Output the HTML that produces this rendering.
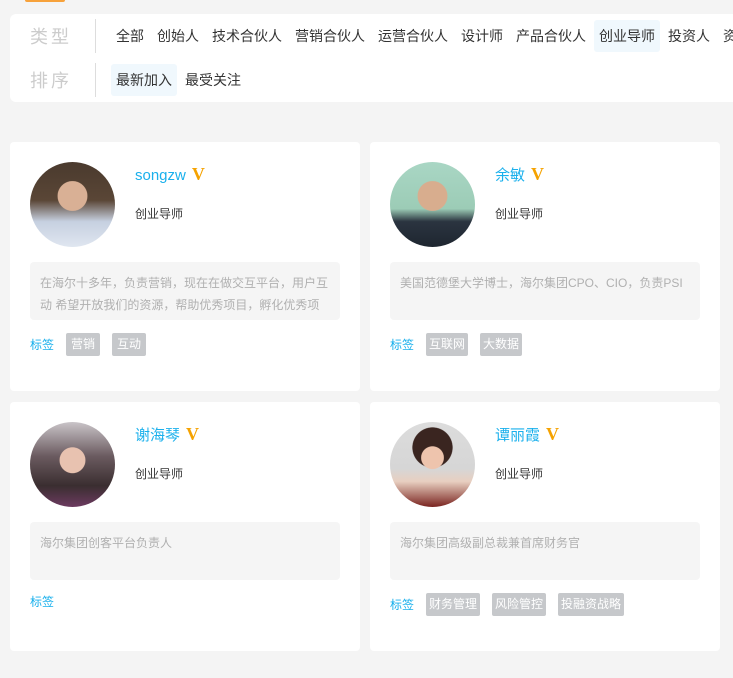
<!DOCTYPE html>
<html><head><meta charset="utf-8"><style>
*{margin:0;padding:0;box-sizing:border-box}
body{width:733px;height:678px;overflow:hidden;background:#f4f4f4;font-family:"Liberation Sans","Noto Sans CJK SC",sans-serif;position:relative}
.top{position:absolute;left:25px;top:-6px;width:40px;height:8px;background:#f7a23b;border-radius:2px}
.filter{position:absolute;left:10px;top:14px;width:740px;height:88px;background:#fff;border-radius:6px}
.row{position:absolute;left:0;height:44px;display:flex;align-items:center;white-space:nowrap}
.lab{width:85px;padding-left:20px;font-size:18px;color:#ccc;letter-spacing:3px}
.div{width:1px;height:34px;background:#ddd;margin-right:15px}
.it{font-size:14px;color:#333;padding:6px 5px;margin-right:3px;border-radius:3px}
.it.on{background:#f0f8fd}
.card{position:absolute;width:350px;height:249px;background:#fff;border-radius:4px}
.av{position:absolute;left:20px;top:20px;width:85px;height:85px;border-radius:50%;overflow:hidden}
.nm{position:absolute;left:125px;top:22px;font-size:15px;color:#1ab0ec}
.v{color:#f5a200;font-family:"Liberation Serif",serif;font-weight:bold;font-size:18px;margin-left:6px}
.role{position:absolute;left:125px;top:63px;font-size:12px;color:#333}
.desc{position:absolute;left:20px;top:120px;width:310px;height:58px;background:#f5f5f5;border-radius:4px;padding:10px 10px 0;font-size:12px;line-height:22px;color:#b0b0b0;overflow:hidden}
.tags{position:absolute;left:20px;top:191px;display:flex;align-items:center;font-size:12px}
.tl{color:#1ab0ec;margin-right:12px}
.tg{background:#c6c8cb;color:#fff;height:23px;line-height:23px;padding:0 3px;min-width:34px;text-align:center;border-radius:2px;margin-right:12px}
</style></head><body>
<div class="top"></div>
<div class="filter">
<div class="row" style="top:0px"><div class="lab">类型</div><div class="div"></div>
<span class="it">全部</span><span class="it">创始人</span><span class="it">技术合伙人</span><span class="it">营销合伙人</span><span class="it">运营合伙人</span><span class="it">设计师</span><span class="it">产品合伙人</span><span class="it on">创业导师</span><span class="it">投资人</span><span class="it">资源</span></div>
<div class="row" style="top:44px"><div class="lab">排序</div><div class="div"></div>
<span class="it on">最新加入</span><span class="it">最受关注</span></div>
</div>

<div class="card" style="left:10px;top:142px">
<div class="av" style="background:radial-gradient(circle at 50% 40%,#d9b095 0 22%,transparent 23%),linear-gradient(180deg,#4a3a2e 0,#5a4636 45%,#c6d0e0 70%,#dfe6f0 100%)"></div>
<div class="nm">songzw<span class="v">V</span></div>
<div class="role">创业导师</div>
<div class="desc">在海尔十多年，负责营销，现在在做交互平台，用户互动 希望开放我们的资源，帮助优秀项目，孵化优秀项</div>
<div class="tags"><span class="tl">标签</span><span class="tg">营销</span><span class="tg">互动</span></div>
</div>

<div class="card" style="left:370px;top:142px">
<div class="av" style="background:radial-gradient(circle at 50% 40%,#d8ad8e 0 22%,transparent 23%),linear-gradient(180deg,#a9d6c4 0,#9cccb6 55%,#2b3440 70%,#1e2630 100%)"></div>
<div class="nm">余敏<span class="v">V</span></div>
<div class="role">创业导师</div>
<div class="desc">美国范德堡大学博士，海尔集团CPO、CIO，负责PSI</div>
<div class="tags"><span class="tl">标签</span><span class="tg">互联网</span><span class="tg">大数据</span></div>
</div>

<div class="card" style="left:10px;top:402px">
<div class="av" style="background:radial-gradient(circle at 50% 45%,#e8c2b0 0 20%,transparent 21%),linear-gradient(180deg,#c9c4c8 0,#6b5b60 40%,#3a2e30 75%,#6c3a60 100%)"></div>
<div class="nm">谢海琴<span class="v">V</span></div>
<div class="role">创业导师</div>
<div class="desc">海尔集团创客平台负责人</div>
<div class="tags"><span class="tl">标签</span></div>
</div>

<div class="card" style="left:370px;top:402px">
<div class="av" style="background:radial-gradient(circle at 50% 42%,#eec4ad 0 17%,transparent 18%),radial-gradient(circle at 50% 30%,#3a2520 0 27%,transparent 28%),linear-gradient(180deg,#dcdcdc 0,#d6d6d6 55%,#e8cfc0 70%,#7a2420 100%)"></div>
<div class="nm">谭丽霞<span class="v">V</span></div>
<div class="role">创业导师</div>
<div class="desc">海尔集团高级副总裁兼首席财务官</div>
<div class="tags"><span class="tl">标签</span><span class="tg">财务管理</span><span class="tg">风险管控</span><span class="tg">投融资战略</span></div>
</div>
</body></html>
